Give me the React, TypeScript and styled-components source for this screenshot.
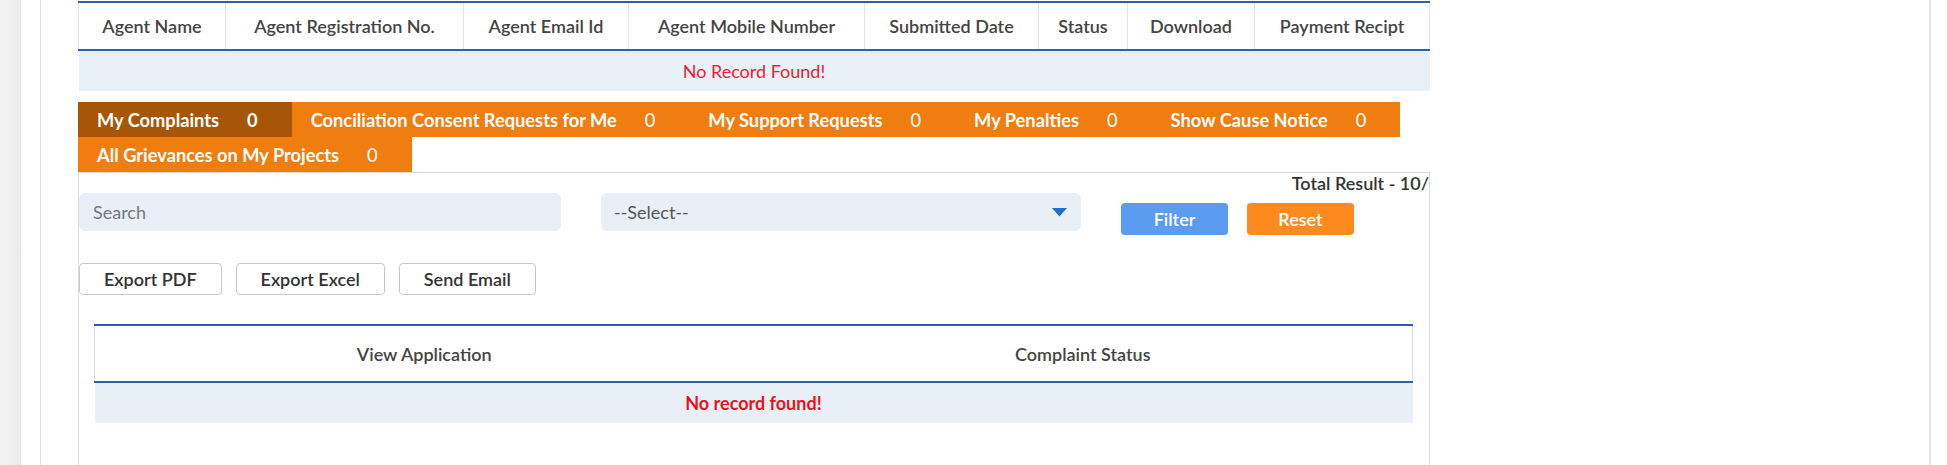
import React from "react";
import styled, { createGlobalStyle } from "styled-components";

const GlobalStyle = createGlobalStyle`
  html, body {
    margin: 0;
    padding: 0;
    background: #ffffff;
    font-family: "Lato", "Open Sans", sans-serif;
  }
`;

// widths exclude the 1px cell borders
const agentColumns = [
  { label: "Agent Name", w: 146 },
  { label: "Agent Registration No.", w: 237 },
  { label: "Agent Email Id", w: 164 },
  { label: "Agent Mobile Number", w: 235 },
  { label: "Submitted Date", w: 173 },
  { label: "Status", w: 88 },
  { label: "Download", w: 126 },
  { label: "Payment Recipt", w: 174 },
];

const tabs = [
  { label: "My Complaints", count: 0, active: true },
  { label: "Conciliation Consent Requests for Me", count: 0 },
  { label: "My Support Requests", count: 0 },
  { label: "My Penalties", count: 0 },
  { label: "Show Cause Notice", count: 0 },
  { label: "All Grievances on My Projects", count: 0 },
];

export default function App() {
  return (
    <>
      <GlobalStyle />
      <Page>
        <Shadow />
        <Gutter />
        <Card>
          <Content>
            <AgentTable>
              <thead>
                <tr>
                  {agentColumns.map((c) => (
                    <HeadCell key={c.label} $w={c.w}>
                      {c.label}
                    </HeadCell>
                  ))}
                </tr>
              </thead>
              <tbody>
                <tr>
                  <EmptyCell colSpan={agentColumns.length}>No Record Found!</EmptyCell>
                </tr>
              </tbody>
            </AgentTable>

            <Tabs>
              {tabs.map((t) => (
                <Tab key={t.label} $active={!!t.active}>
                  {t.label}
                  <Count $active={!!t.active}>{t.count}</Count>
                </Tab>
              ))}
            </Tabs>

            <Panel>
              <TotalRow>Total Result - 10/</TotalRow>
              <FilterRow>
                <SearchInput placeholder="Search" />
                <SelectBox>
                  <span>--Select--</span>
                  <svg width="15" height="9" viewBox="0 0 15 9">
                    <path d="M0 0 H15 L7.5 8.5 Z" fill="#1c6fd6" />
                  </svg>
                </SelectBox>
                <ActionButton $color="#5b9cf0">Filter</ActionButton>
                <ActionButton $color="#fd8a1d">Reset</ActionButton>
              </FilterRow>

              <ExportRow>
                <ExportButton>Export PDF</ExportButton>
                <ExportButton>Export Excel</ExportButton>
                <ExportButton>Send Email</ExportButton>
              </ExportRow>

              <ComplaintTable>
                <thead>
                  <tr>
                    <ComplaintHead>View Application</ComplaintHead>
                    <ComplaintHead>Complaint Status</ComplaintHead>
                  </tr>
                </thead>
                <tbody>
                  <tr>
                    <NoRecordCell colSpan={2}>No record found!</NoRecordCell>
                  </tr>
                </tbody>
              </ComplaintTable>
            </Panel>
          </Content>
        </Card>
      </Page>
    </>
  );
}

const Page = styled.div`
  display: flex;
  height: 465px;
  overflow: hidden;
`;

const Shadow = styled.div`
  width: 20px;
  flex-shrink: 0;
  background: linear-gradient(to right, #f4f4f4, #ececec);
  border-right: 1px solid #e6e6e6;
`;

const Gutter = styled.div`
  width: 19px;
  flex-shrink: 0;
`;

const Card = styled.div`
  flex: 1;
  margin-right: 16px;
  border-left: 1px solid #e2e2e2;
  border-right: 2px solid #e6e6e6;
  padding-left: 37px;
`;

const Content = styled.div`
  width: 1352px;
  display: flex;
  flex-direction: column;
`;

const AgentTable = styled.table`
  width: 1352px;
  border-collapse: collapse;
  table-layout: fixed;
  margin-top: 1px;
  border-top: 2px solid #2b5db2;
`;

const HeadCell = styled.th<{ $w: number }>`
  width: ${(p) => p.$w}px;
  height: 46px;
  padding: 0;
  border-left: 1px solid #e3e3e3;
  border-right: 1px solid #e3e3e3;
  border-bottom: 2px solid #2f62b4;
  font-size: 18px;
  font-weight: 600;
  color: #444444;
  text-align: center;
  white-space: nowrap;
`;

const EmptyCell = styled.td`
  height: 40px;
  padding: 0;
  background: #e8f0f8;
  color: #ec1c36;
  font-size: 18px;
  text-align: center;
`;

const Tabs = styled.div`
  display: flex;
  flex-wrap: wrap;
  margin-top: 11px;
`;

const Tab = styled.div<{ $active: boolean }>`
  display: flex;
  align-items: center;
  height: 35px;
  padding: 0 34px 0 19px;
  background: ${(p) => (p.$active ? "#a75608" : "#ef7d10")};
  color: #ffffff;
  font-size: 18.25px;
  font-weight: 700;
  white-space: nowrap;
`;

const Count = styled.span<{ $active: boolean }>`
  margin-left: 28px;
  font-weight: ${(p) => (p.$active ? 700 : 400)};
`;

const Panel = styled.div`
  border: 1px solid #dcdcdc;
  border-bottom: none;
  min-height: 300px;
  padding: 0;
`;

const TotalRow = styled.div`
  height: 20px;
  line-height: 20px;
  text-align: right;
  font-size: 18px;
  font-weight: 600;
  color: #333333;
  white-space: nowrap;
  overflow: hidden;
`;

const FilterRow = styled.div`
  display: flex;
  align-items: flex-start;
`;

const SearchInput = styled.input`
  width: 482px;
  height: 38px;
  box-sizing: border-box;
  border: none;
  border-radius: 6px;
  background: #e8eff7;
  padding: 0 14px;
  font-family: inherit;
  font-size: 18px;
  color: #333333;
  outline: none;
  &::placeholder {
    color: #777777;
  }
`;

const SelectBox = styled.div`
  width: 480px;
  height: 38px;
  margin-left: 40px;
  box-sizing: border-box;
  border-radius: 6px;
  background: #e8eff7;
  padding: 0 14px 0 13px;
  display: flex;
  align-items: center;
  justify-content: space-between;
  font-size: 18px;
  color: #555555;
`;

const ActionButton = styled.button<{ $color: string }>`
  height: 32px;
  width: 107px;
  margin-top: 10px;
  margin-left: 40px;
  border: none;
  border-radius: 4px;
  background: ${(p) => p.$color};
  color: #ffffff;
  font-family: inherit;
  font-size: 18px;
  font-weight: 600;
  & + & {
    margin-left: 19px;
  }
`;

const ExportRow = styled.div`
  display: flex;
  gap: 14px;
  margin-top: 28px;
`;

const ExportButton = styled.button`
  height: 32px;
  padding: 0 24px;
  background: #ffffff;
  border: 1px solid #c9c9c9;
  border-radius: 4px;
  font-family: inherit;
  font-size: 18px;
  font-weight: 600;
  color: #333333;
`;

const ComplaintTable = styled.table`
  width: 1319px;
  margin: 29px 0 0 15px;
  border-collapse: collapse;
  table-layout: fixed;
  border-top: 2px solid #2b5db2;
`;

const ComplaintHead = styled.th`
  height: 55px;
  padding: 0;
  border-bottom: 2px solid #2f62b4;
  font-size: 18px;
  font-weight: 600;
  color: #444444;
  text-align: center;
  &:first-child {
    border-left: 1px solid #dedede;
  }
  &:last-child {
    border-right: 1px solid #dedede;
  }
`;

const NoRecordCell = styled.td`
  height: 40px;
  padding: 0;
  background: #e8eff6;
  color: #ea1020;
  font-size: 18px;
  font-weight: 700;
  text-align: center;
`;
